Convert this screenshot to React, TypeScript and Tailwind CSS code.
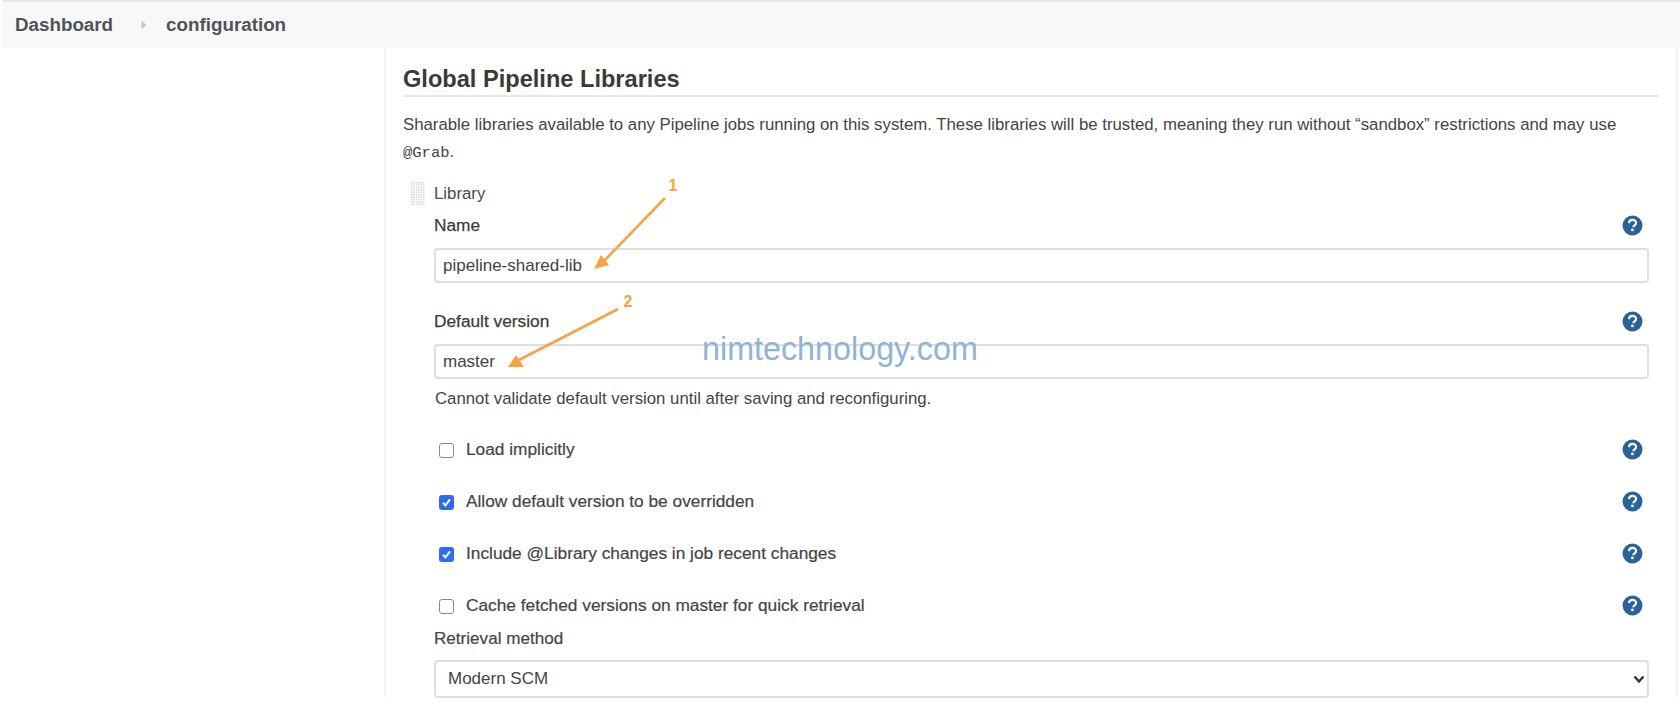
const sans = "font-['Liberation_Sans',Arial,sans-serif]";

function Help() {
  return (
    <svg width="21" height="21" viewBox="0 0 21 21" className="shrink-0 -translate-y-[2px]">
      <circle cx="10.5" cy="10.5" r="10" fill="#2a6399" />
      <path d="M7 8.1c.1-2 1.6-3.2 3.6-3.2 2.1 0 3.5 1.2 3.5 2.9 0 1.2-.6 1.9-1.6 2.6-.9.6-1.2 1-1.2 1.9" fill="none" stroke="#fff" strokeWidth="2.1" />
      <rect x="9.2" y="13.7" width="2.4" height="2.4" fill="#fff" />
    </svg>
  );
}

function Check({ on, label }: { on: boolean; label: string }) {
  return (
    <div className="flex h-5 items-center pr-[6px]">
      {on ? (
        <span className="ml-[5px] flex h-[15px] w-[15px] -translate-y-[1px] items-center justify-center rounded-[3px] bg-[#2d6cf0]">
          <svg width="11" height="11" viewBox="0 0 11 11">
            <path d="M2 5.8l2.4 2.6L9 2.4" fill="none" stroke="#fff" strokeWidth="2" />
          </svg>
        </span>
      ) : (
        <span className="ml-[5px] h-[15px] w-[15px] -translate-y-[1px] rounded-[3px] border border-[#8a8a8a] bg-white" />
      )}
      <span className="ml-3 flex-1 -translate-y-[1px] text-[17.3px] text-[#444] [-webkit-text-stroke:0.2px_#444]">{label}</span>
      <Help />
    </div>
  );
}

function Field({ label, value }: { label: string; value: string }) {
  return (
    <div>
      <div className="flex h-5 items-center pr-[6px]">
        <span className="flex-1 -translate-y-[1px] text-[17.3px] text-[#3c3c3c] [-webkit-text-stroke:0.25px_#3c3c3c]">{label}</span>
        <Help />
      </div>
      <input
        readOnly
        value={value}
        className="mt-[11px] block h-[35px] w-full rounded-[4px] border-2 border-[#dedede] bg-white px-[7px] text-[17px] text-[#444] outline-none"
      />
    </div>
  );
}

export default function App() {
  return (
    <div className={`relative h-[704px] w-[1680px] overflow-hidden bg-white text-[#333] ${sans}`}>
      <header className="ml-[2px] flex h-[48px] items-center border-t-2 border-[#e6e6e6] bg-[#f8f8f8] pl-[13px] text-[18.8px] font-bold text-[#4d535b]">
        <span>Dashboard</span>
        <svg width="6" height="10" viewBox="0 0 6 10" className="ml-[28px]">
          <path d="M0.5 0.5L5.5 5L0.5 9.5Z" fill="#c4c4c4" />
        </svg>
        <span className="ml-[19px]">configuration</span>
      </header>

      <main className="ml-[384px] mr-[2px] h-[649px] border-x-2 border-[#f1f3f6] pl-[17px] pr-[17px]">
        <h2 className="flex h-[49px] items-center border-b-2 border-[#e9e9e9] pt-[17px] text-[23.6px] font-bold leading-none text-[#3a3a3a]">
          Global Pipeline Libraries
        </h2>
        <p className="mt-[14px] text-[16.8px] leading-[27px] text-[#444]">
          Sharable libraries available to any Pipeline jobs running on this system. These libraries will be trusted, meaning they run without “sandbox” restrictions and may use{" "}
          <code className="font-['Liberation_Mono',monospace] text-[15.5px]">@Grab</code>.
        </p>

        <div className="relative mt-[14px] flex h-[26px] items-center pl-[31px]">
          <svg width="14" height="24" viewBox="0 0 14 24" className="absolute left-[8px] top-[1px]">
            <defs>
              <pattern id="dots" width="2.4" height="2.4" patternUnits="userSpaceOnUse">
                <rect width="1.5" height="1.5" fill="#d6d6d6" />
              </pattern>
            </defs>
            <rect width="14" height="24" fill="url(#dots)" />
          </svg>
          <span className="text-[16.8px] text-[#4a4a4a]">Library</span>
        </div>

        <div className="mt-[10px] flex flex-col pl-[31px] pr-[10px]">
          <Field label="Name" value="pipeline-shared-lib" />
          <div className="mt-[30px]">
            <Field label="Default version" value="master" />
          </div>
          <div className="mt-[11px] h-[18px] pl-[1px] text-[16.8px] leading-[18px] text-[#444]">
            Cannot validate default version until after saving and reconfiguring.
          </div>
          <div className="mt-[33px] flex flex-col gap-[32px]">
            <Check on={false} label="Load implicitly" />
            <Check on label="Allow default version to be overridden" />
            <Check on label="Include @Library changes in job recent changes" />
            <Check on={false} label="Cache fetched versions on master for quick retrieval" />
          </div>
          <div className="mt-[12px] h-5 text-[17.1px] leading-5 text-[#444] [-webkit-text-stroke:0.2px_#444]">Retrieval method</div>
          <div className="relative mt-[11px]">
            <select className="block h-[38px] w-full appearance-none rounded-[4px] border-2 border-[#dedede] bg-white pl-[12px] text-[17px] text-[#444] outline-none">
              <option>Modern SCM</option>
            </select>
            <svg width="12" height="9" viewBox="0 0 12 9" className="absolute right-[4px] top-[15px]">
              <path d="M1.5 1.5L6 6.5L10.5 1.5" fill="none" stroke="#333" strokeWidth="2.4" />
            </svg>
          </div>
        </div>
      </main>

      <svg width="1680" height="704" className="pointer-events-none absolute left-0 top-0">
        <path d="M665 198L604 261" stroke="#f6a345" strokeWidth="2.6" fill="none" />
        <path d="M594 269L601 255L609 265Z" fill="#f6a345" />
        <path d="M618 309L517 361" stroke="#f6a345" strokeWidth="2.6" fill="none" />
        <path d="M508 367L516 355L524 367Z" fill="#f6a345" />
      </svg>
      <span className="absolute left-[673px] top-[177px] -translate-x-1/2 text-[16px] font-bold leading-[18px] text-[#f6a345]">1</span>
      <span className="absolute left-[628px] top-[293px] -translate-x-1/2 text-[16px] font-bold leading-[18px] text-[#f6a345]">2</span>
      <span className="absolute left-[702px] top-[331px] text-[32.3px] leading-[36px] text-[#8fb3d9]">nimtechnology.com</span>
    </div>
  );
}
